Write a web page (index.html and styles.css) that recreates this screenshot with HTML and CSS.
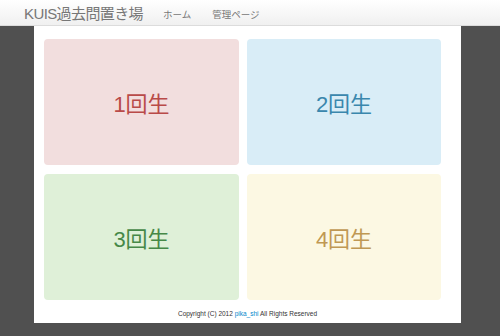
FILE: index.html
```html
<!DOCTYPE html>
<html lang="ja">
<head>
    <meta charset="UTF-8">
    <meta name="viewport" content="width=device-width, initial-scale=1.0">
    <title>KUIS過去問置き場</title>
    <link rel="stylesheet" href="styles.css">
</head>
<body>

<div class="navbar">
    <a class="brand" href="#">KUIS過去問置き場</a>
    <ul class="nav">
        <li><a href="#">ホーム</a></li>
        <li><a href="#">管理ページ</a></li>
    </ul>
</div>

<div class="container">
    <div class="grades">
        <a class="grade red" href="#">1回生</a>
        <a class="grade blue" href="#">2回生</a>
        <a class="grade green" href="#">3回生</a>
        <a class="grade yellow" href="#">4回生</a>
    </div>

    <footer class="footer">
        Copyright (C) 2012 <a href="#">pika_shi</a> All Rights Reserved
    </footer>
</div>

</body>
</html>
```

FILE: styles.css
```css
body {
    margin: 0;
    padding: 0;
    background: #505050;
    font-family: "Liberation Sans", "Noto Sans CJK JP", sans-serif;
    height: 336px;
    overflow: hidden;
}
a {
    text-decoration: none;
}
.navbar {
    height: 26px;
    background: linear-gradient(#ffffff, #f0f0f0);
    border-bottom: 1px solid #dcdcdc;
    box-sizing: border-box;
    display: flex;
    align-items: center;
    padding-left: 24px;
}
.brand {
    color: #777;
    font-size: 15px;
    margin-right: 20px;
    letter-spacing: -0.6px;
}
.nav {
    list-style: none;
    margin: 0;
    padding: 0;
    display: flex;
    gap: 21px;
}
.nav a {
    color: #777;
    font-size: 9.5px;
}
.container {
    background: #fff;
    width: 427px;
    height: 297px;
    margin-left: 34px;
    box-sizing: border-box;
    padding: 13px 20px 0 10px;
}
.grades {
    display: grid;
    grid-template-columns: 195px 194px;
    grid-template-rows: 126px 126px;
    column-gap: 8px;
    row-gap: 9px;
}
.grade {
    border-radius: 4px;
    display: flex;
    align-items: center;
    justify-content: center;
    font-size: 22px;
}
.red { background: #f2dede; color: #b94a48; }
.blue { background: #d9edf7; color: #3a87ad; }
.green { background: #dff0d8; color: #468847; }
.yellow { background: #fcf8e3; color: #c09853; }
.footer {
    text-align: center;
    font-size: 6.5px;
    color: #333;
    margin-top: 10px;
    padding-left: 10px;
}
.footer a {
    color: #08c;
}
```
